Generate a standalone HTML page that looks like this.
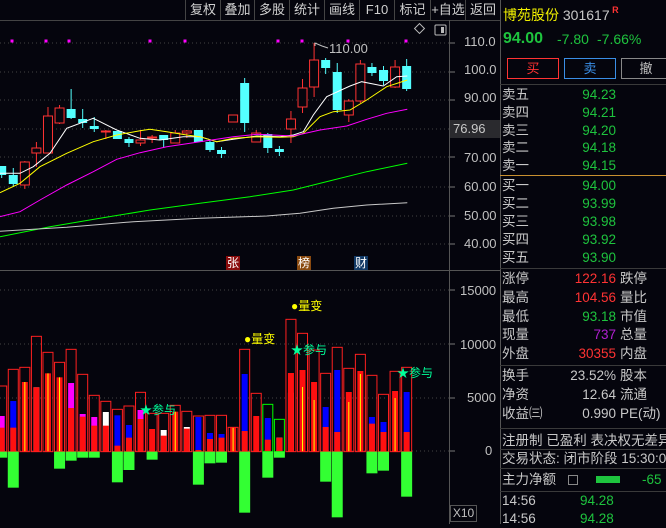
<!DOCTYPE html>
<html><head><meta charset="utf-8">
<style>
*{margin:0;padding:0;box-sizing:border-box}
body{width:666px;height:524px;background:#05050d;overflow:hidden;position:relative;font-family:"Liberation Sans","Noto Sans CJK SC",sans-serif;color:#c8c8c8}
.a{position:absolute;white-space:nowrap}
.tb{position:absolute;top:0;height:20px;font-size:13px;line-height:20px;text-align:center;color:#d0d0d0;border-left:1px solid #444}
.r{position:absolute;left:502px;width:164px;height:18px;font-size:13.5px;line-height:18px;white-space:nowrap;overflow:hidden}
.r span{position:absolute;white-space:nowrap}
.g{color:#1ec43e}.rd{color:#ff3333}
.hl{position:absolute;left:500px;width:166px;height:1px;background:#3a3a3a}
</style></head><body>
<div class="a" style="left:0;top:20px;width:500px;height:1px;background:#444"></div>
<div class="tb" style="left:185px;width:35px">复权</div>
<div class="tb" style="left:220px;width:34px">叠加</div>
<div class="tb" style="left:254px;width:35px">多股</div>
<div class="tb" style="left:289px;width:35px">统计</div>
<div class="tb" style="left:324px;width:35px">画线</div>
<div class="tb" style="left:359px;width:35px">F10</div>
<div class="tb" style="left:394px;width:36px">标记</div>
<div class="tb" style="left:430px;width:35px">+自选</div>
<div class="tb" style="left:465px;width:35px">返回</div>

<svg id="ch" class="a" style="left:0;top:0" width="500" height="524" xmlns="http://www.w3.org/2000/svg"></svg>

<div class="a" style="left:449px;top:20px;width:1px;height:504px;background:#555"></div>
<div class="a" style="left:0;top:270px;width:500px;height:1px;background:#555"></div>
<div class="a" style="left:500px;top:0;width:1px;height:524px;background:#555"></div>

<div class="a" style="left:450px;top:120px;width:50px;height:18px;background:#2a2a2e;color:#c8c8c8;font-size:13px;line-height:18px;padding-left:3px">76.96</div>
<div class="a" style="left:464px;top:35px;font-size:13px;color:#c0c0c0;line-height:14px">110.0<br><br>100.0<br><br>90.00</div>
<div class="a" style="left:464px;top:150px;font-size:13px;color:#c0c0c0">70.00</div>
<div class="a" style="left:464px;top:179px;font-size:13px;color:#c0c0c0">60.00</div>
<div class="a" style="left:464px;top:208px;font-size:13px;color:#c0c0c0">50.00</div>
<div class="a" style="left:464px;top:236px;font-size:13px;color:#c0c0c0">40.00</div>
<div class="a" style="left:460px;top:283px;font-size:13px;color:#c0c0c0">15000</div>
<div class="a" style="left:460px;top:337px;font-size:13px;color:#c0c0c0">10000</div>
<div class="a" style="left:467px;top:390px;font-size:13px;color:#c0c0c0">5000</div>
<div class="a" style="left:485px;top:443px;font-size:13px;color:#c0c0c0">0</div>
<div class="a" style="left:450px;top:505px;width:27px;height:17px;border:1px solid #555;font-size:12px;line-height:15px;color:#c0c0c0;text-align:center">X10</div>

<div class="a" style="left:226px;top:256px;width:14px;height:14px;background:#8a0c0c;color:#fff;font-size:12px;line-height:14px;text-align:center">张</div>
<div class="a" style="left:297px;top:256px;width:14px;height:14px;background:#8a4a10;color:#fff;font-size:12px;line-height:14px;text-align:center">榜</div>
<div class="a" style="left:354px;top:256px;width:14px;height:14px;background:#123a66;color:#fff;font-size:12px;line-height:14px;text-align:center">财</div>

<!-- right panel -->
<div class="a" style="left:503px;top:5px;font-size:14px;color:#f0f000">博苑股份 <span style="color:#c8c8c8">301617</span><span style="color:#ff3333;font-size:9px;font-weight:bold;vertical-align:top"> R</span></div>
<div class="a" style="left:503px;top:30px;font-size:16px;font-weight:bold" ><span class="g">94.00</span></div>
<div class="a g" style="left:557px;top:31px;font-size:14px">-7.80</div>
<div class="a g" style="left:597px;top:31px;font-size:14px">-7.66%</div>
<div class="a" style="left:507px;top:58px;width:52px;height:21px;border:1px solid #ff3333;color:#ff3333;text-align:center;font-size:13px;line-height:19px">买</div>
<div class="a" style="left:564px;top:58px;width:52px;height:21px;border:1px solid #3a8ee6;color:#3a8ee6;text-align:center;font-size:13px;line-height:19px">卖</div>
<div class="a" style="left:621px;top:58px;width:50px;height:21px;border:1px solid #888;color:#c0c0c0;text-align:center;font-size:13px;line-height:19px">撤</div>
<div class="hl" style="top:84px"></div>

<div class="r" style="top:86px"><span>卖五</span><span class="g" style="right:50px">94.23</span></div>
<div class="r" style="top:104px"><span>卖四</span><span class="g" style="right:50px">94.21</span></div>
<div class="r" style="top:122px"><span>卖三</span><span class="g" style="right:50px">94.20</span></div>
<div class="r" style="top:139px"><span>卖二</span><span class="g" style="right:50px">94.18</span></div>
<div class="r" style="top:157px"><span>卖一</span><span class="g" style="right:50px">94.15</span></div>
<div class="hl" style="top:175px;background:#c89030"></div>
<div class="r" style="top:177px"><span>买一</span><span class="g" style="right:50px">94.00</span></div>
<div class="r" style="top:195px"><span>买二</span><span class="g" style="right:50px">93.99</span></div>
<div class="r" style="top:213px"><span>买三</span><span class="g" style="right:50px">93.98</span></div>
<div class="r" style="top:231px"><span>买四</span><span class="g" style="right:50px">93.92</span></div>
<div class="r" style="top:249px"><span>买五</span><span class="g" style="right:50px">93.90</span></div>
<div class="hl" style="top:268px"></div>
<div class="r" style="top:270px"><span>涨停</span><span class="rd" style="right:50px">122.16</span><span style="left:118px">跌停</span></div>
<div class="r" style="top:289px"><span>最高</span><span class="rd" style="right:50px">104.56</span><span style="left:118px">量比</span></div>
<div class="r" style="top:308px"><span>最低</span><span class="g" style="right:50px">93.18</span><span style="left:118px">市值</span></div>
<div class="r" style="top:326px"><span>现量</span><span style="right:50px;color:#b020d0">737</span><span style="left:118px">总量</span></div>
<div class="r" style="top:345px"><span>外盘</span><span class="rd" style="right:50px">30355</span><span style="left:118px">内盘</span></div>
<div class="hl" style="top:365px"></div>
<div class="r" style="top:367px"><span>换手</span><span style="right:50px">23.52%</span><span style="left:118px">股本</span></div>
<div class="r" style="top:386px"><span>净资</span><span style="right:50px">12.64</span><span style="left:118px">流通</span></div>
<div class="r" style="top:405px"><span>收益㈢</span><span style="right:50px">0.990</span><span style="left:118px">PE(动)</span></div>
<div class="hl" style="top:428px"></div>
<div class="r" style="top:432px"><span>注册制 已盈利 表决权无差异</span></div>
<div class="hl" style="top:449px"></div>
<div class="r" style="top:450px"><span>交易状态: 闭市阶段 15:30:00</span></div>
<div class="hl" style="top:468px"></div>
<div class="r" style="top:471px"><span>主力净额</span><span style="left:66px;top:4px;width:10px;height:10px;border:1px solid #888"></span><span style="left:94px;top:5px;width:24px;height:7px;background:#1ec43e"></span><span class="g" style="left:140px">-65</span></div>
<div class="hl" style="top:491px"></div>
<div class="r" style="top:492px"><span>14:56</span><span class="g" style="left:78px">94.28</span></div>
<div class="r" style="top:510px"><span>14:56</span><span class="g" style="left:78px">94.28</span></div>

<script>
var s=document.getElementById('ch'),h='';
function X(i){return 1.7+11.57*i}
[43,72,100,129,157,187,216,244].forEach(function(y){h+='<line x1="0" x2="449" y1="'+y+'" y2="'+y+'" stroke="#444" stroke-dasharray="1,3"/>';h+='<line x1="449" x2="455" y1="'+y+'" y2="'+y+'" stroke="#777"/>'});
[290,344,398,451].forEach(function(y){h+='<line x1="0" x2="449" y1="'+y+'" y2="'+y+'" stroke="#444" stroke-dasharray="1,3"/>';h+='<line x1="449" x2="455" y1="'+y+'" y2="'+y+'" stroke="#777"/>'});
var C=[[0,166,175,166,178],[0,175,184,168,187],[1,162,185,161,189],[1,148,153,142,167],[1,116,153,107,153],[1,108,123,105,124],[0,109,118,89,119],[0,119,123,109,128],[0,126,129,117,132],[1,131,131,130,139],[0,131,139,131,139],[0,139,143,137,147],[1,140,143,130,146],[1,137,137,135,143],[0,135,140,135,148],[1,133,143,130,143],[1,131,133,130,138],[0,130,142,130,142],[0,142,150,140,152],[0,150,154,147,158],[1,115,122,115,122],[0,83,123,78,132],[1,133,142,130,142],[0,134,148,133,153],[0,149,152,146,156],[1,119,129,111,143],[1,88,107,79,113],[1,60,87,43,97],[0,60,68,58,74],[0,72,110,63,113],[1,101,115,99,122],[1,64,101,60,103],[0,67,73,63,76],[0,70,81,66,85],[1,67,87,60,88],[0,66,89,59,91]];
C.forEach(function(c,i){var x=X(i),col=c[0]?'#ff3232':'#54ffff';
h+='<line x1="'+x+'" x2="'+x+'" y1="'+c[3]+'" y2="'+c[4]+'" stroke="'+col+'"/>';
var hh=Math.max(1,c[2]-c[1]);
h+='<rect x="'+(x-4.5)+'" y="'+c[1]+'" width="9" height="'+hh+'" '+(c[0]?'fill="#05050d" stroke="#ff3232"':'fill="#54ffff"')+'/>';});
function P(a,col){var p=[];for(var k=0;k<a.length;k+=2)p.push((a[k]/3).toFixed(1)+','+(a[k+1]/3).toFixed(1));h+='<polyline fill="none" stroke="'+col+'" stroke-width="1" points="'+p.join(' ')+'"/>'}
P([0,520,60,520,100,500,150,460,200,385,280,355,350,390,420,415,480,420,550,410,600,410,650,425,700,418,770,408,840,410,880,405,910,395,940,345,980,290,1050,258,1085,245,1150,258,1190,230,1222,228],'#ffffff');
P([0,578,60,550,120,500,200,460,280,425,350,405,420,392,450,388,500,395,560,405,600,410,650,425,700,415,770,410,840,412,880,410,910,400,960,350,1000,335,1050,330,1100,300,1160,260,1222,240],'#ffff00');
P([0,650,60,635,120,600,200,555,280,515,350,478,420,458,500,440,600,425,700,410,770,403,880,408,960,390,1040,378,1100,358,1160,340,1222,328],'#ff00ff');
P([0,710,150,680,300,655,450,630,600,610,750,590,880,570,1000,540,1100,515,1222,490],'#00ff00');
P([0,694,200,682,400,665,600,655,800,648,900,640,1000,625,1100,615,1222,608],'#c8c8c8');
[12,46,69,150,185,278,302,348,406].forEach(function(x){h+='<rect x="'+(x-1.5)+'" y="39.5" width="3" height="3" fill="#ff00ff"/>'});
h+='<polyline points="315,46 315,43 322,46 328,48" fill="none" stroke="#c0c0c0"/><text x="329" y="53" font-size="13" fill="#c0c0c0" font-family="Liberation Sans">110.00</text>';
h+='<rect x="416" y="25" width="7" height="7" transform="rotate(45 419.5 28.5)" fill="none" stroke="#bbb"/><rect x="435" y="25" width="11" height="10" rx="1" fill="none" stroke="#bbb"/><rect x="441" y="27" width="3" height="6" fill="#bbb"/>';
function Y(z){return 270+z/3}
var V=[[348,'#ff00ff',438,473,563],[298,'#0000ff',393,473,653],[292,'#ffff00',336,336,0],[199,'#ffffff',352,352,0],[247,'#ffff00',310,310,0],[277,'#ffff00',322,322,596],[238,'#ff00ff',339,414,572],[313,'#ff00ff',432,440,563],[376,'#ff00ff',441,467,563],[394,'#ffffff',426,467,0],[418,'#0000ff',436,527,637],[408,'#0000ff',465,503,600],[367,'#ff00ff',420,447,0],[430,'#ff3232',477,477,569],[430,'#ffffff',480,497,0],[406,'#ffff00',425,425,0],[424,'#ffffff',471,476,0],[438,'#0000ff',441,540,644],[436,'#0000ff',489,507,580],[436,'#0000ff',492,503,578],[472,'#ffff00',471,471,0],[238,'#0000ff',312,483,728],[370,'#ff3232',438,438,0],[403,'#0000ff',444,509,623],[448,'#ffffff',503,503,563],[148,'#ffffff',368,309,0],[190,'#ffff00',351,300,0],[240,'#ffff00',390,336,0],[310,'#0000ff',411,471,635],[232,'#0000ff',300,486,742],[295,'#ffff00',396,366,0],[253,'#ffff00',312,303,0],[316,'#0000ff',441,461,610],[373,'#0000ff',456,486,602],[304,'#ffff00',384,363,0],[292,'#0000ff',366,486,680]];
V.forEach(function(v,i){var x=X(i),b=Y(545);
var oc=(i==23||i==24)?'#00ff00':'#ff2020';
if(v[1]=='#0000ff'||v[1]=='#ff00ff'||v[1]=='#ffffff'){h+='<rect x="'+(x-3)+'" y="'+Y(v[2])+'" width="6" height="'+(b-Y(v[2]))+'" fill="'+v[1]+'"/>';
 if(v[3]<545)h+='<rect x="'+(x-3)+'" y="'+Y(v[3])+'" width="6" height="'+(b-Y(v[3]))+'" fill="#ff1010"/>';}
else{h+='<rect x="'+(x-3)+'" y="'+Y(v[3])+'" width="6" height="'+(b-Y(v[3]))+'" fill="#ff1010"/>';
 if(v[1]=='#ffff00'||v[1]=='#ffffff')h+='<line x1="'+(x)+'" x2="'+x+'" y1="'+Y(v[2])+'" y2="'+b+'" stroke="'+v[1]+'"/>';}
h+='<rect x="'+(x-5)+'" y="'+Y(v[0])+'" width="10" height="'+(b-Y(v[0]))+'" fill="none" stroke="'+oc+'"/>';
if(v[4])h+='<rect x="'+(x-5.5)+'" y="'+b+'" width="11" height="'+(Y(v[4])-b)+'" fill="#33ff33"/>';});
function L(x,y,t,c,m){h+='<text x="'+x+'" y="'+y+'" font-size="12" fill="'+c+'" font-family="Liberation Sans,Noto Sans CJK SC,sans-serif">'+m+t+'</text>'}
L(244,343,'量变','#ffff00','●');L(291,310,'量变','#ffff00','●');
L(140,414,'参与','#00ff99','★');L(291,354,'参与','#00ff99','★');L(397,377,'参与','#00ff99','★');
s.innerHTML=h;
</script>
</body></html>
